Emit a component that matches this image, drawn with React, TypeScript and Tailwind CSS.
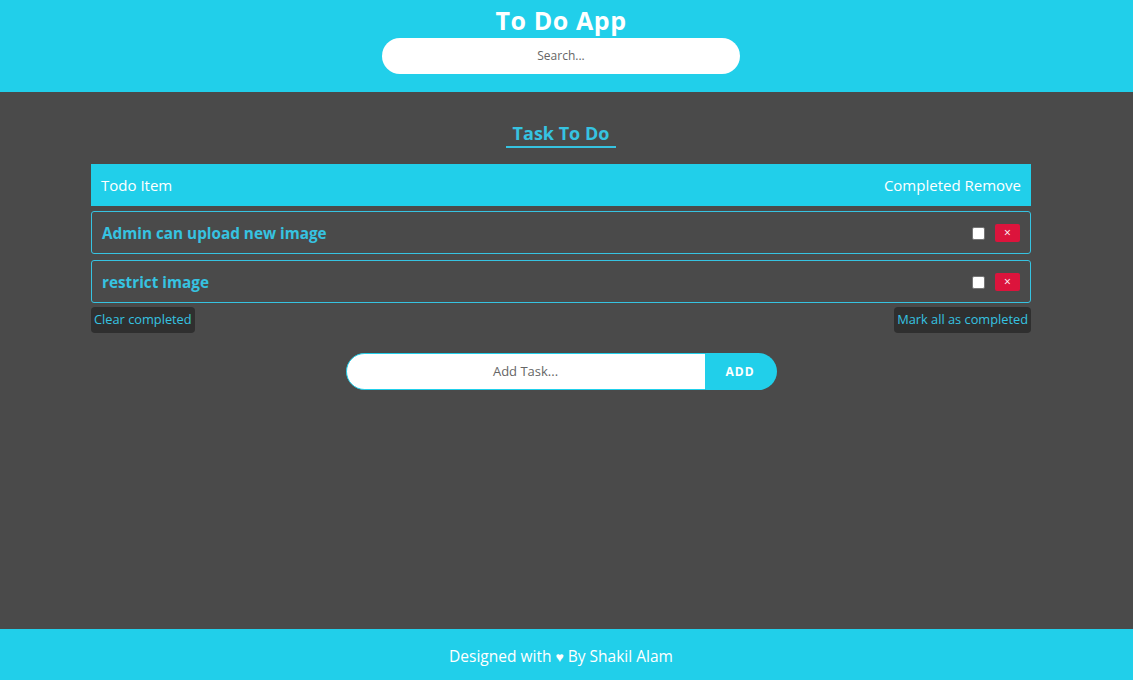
import React from "react";

const font = { fontFamily: '"Open Sans", "Noto Sans", sans-serif' };

export default function App() {
  const items = ["Admin can upload new image", "restrict image"];
  return (
    <div className="flex h-[680px] flex-col bg-[#4a4a4a]" style={font}>
      <header className="h-[92px] bg-[#21cfea]">
        <div className="flex w-[1122px] flex-col items-center pt-[3px]">
          <h1 className="text-[25px] font-bold leading-[35px] tracking-[0.6px] text-white">To Do App</h1>
          <div className="flex h-[36px] w-[358px] items-center justify-center rounded-full bg-white">
            <span className="text-[12px] text-[#666]">Search...</span>
          </div>
        </div>
      </header>

      <main className="flex-1">
        <div className="flex w-[1122px] flex-col items-center px-[91px] pt-[29px]">
          <div className="flex flex-col items-center">
            <h2 className="text-[18px] font-bold leading-[25px] text-[#36c3e1]">Task To Do</h2>
            <div className="h-[2px] w-[110px] bg-[#36c3e1]" />
          </div>

          <div className="mt-[16px] w-full">
            <div className="flex h-[42px] items-center justify-between bg-[#21cfea] px-[10px] text-[15px] text-white">
              <span>Todo Item</span>
              <span>Completed Remove</span>
            </div>
            <div className="mt-[5px] flex flex-col gap-[6px]">
              {items.map((t) => (
                <div
                  key={t}
                  className="flex h-[43px] items-center justify-between rounded-[3px] border border-[#36c3e1] pl-[10px] pr-[10px] pt-[1px]"
                >
                  <span className="text-[15.3px] font-bold text-[#36c3e1]">{t}</span>
                  <div className="flex items-center gap-[10px]">
                    <span className="block h-[13px] w-[13px] rounded-[2px] border border-[#767676] bg-white" />
                    <span className="flex h-[18px] w-[25px] items-center justify-center rounded-[2px] bg-[#dc143c] text-[12px] leading-none text-white">
                      ×
                    </span>
                  </div>
                </div>
              ))}
            </div>
            <div className="mt-[4px] flex items-center justify-between">
              <span className="flex h-[26px] items-center rounded-[4px] bg-[#2f2f2f] px-[3px] text-[12.8px] text-[#36c3e1]">
                Clear completed
              </span>
              <span className="flex h-[26px] items-center rounded-[4px] bg-[#2f2f2f] px-[3px] text-[12.8px] text-[#36c3e1]">
                Mark all as completed
              </span>
            </div>
          </div>

          <div className="mt-[20px] flex h-[37px]">
            <div className="flex w-[360px] items-center justify-center rounded-l-full border border-[#21cfea] bg-white">
              <span className="text-[13px] text-[#666]">Add Task...</span>
            </div>
            <div className="flex w-[71px] items-center justify-center rounded-r-full bg-[#21cfea] pr-[2px] text-[12px] font-bold tracking-[1px] text-white">
              ADD
            </div>
          </div>
        </div>
      </main>

      <footer className="h-[51px] bg-[#21cfea]">
        <div className="flex h-full w-[1122px] items-center justify-center pt-[5px] text-white">
          <p className="text-[15.5px]">
            Designed with <span className="text-[14px]">♥</span> By Shakil Alam
          </p>
        </div>
      </footer>
    </div>
  );
}
